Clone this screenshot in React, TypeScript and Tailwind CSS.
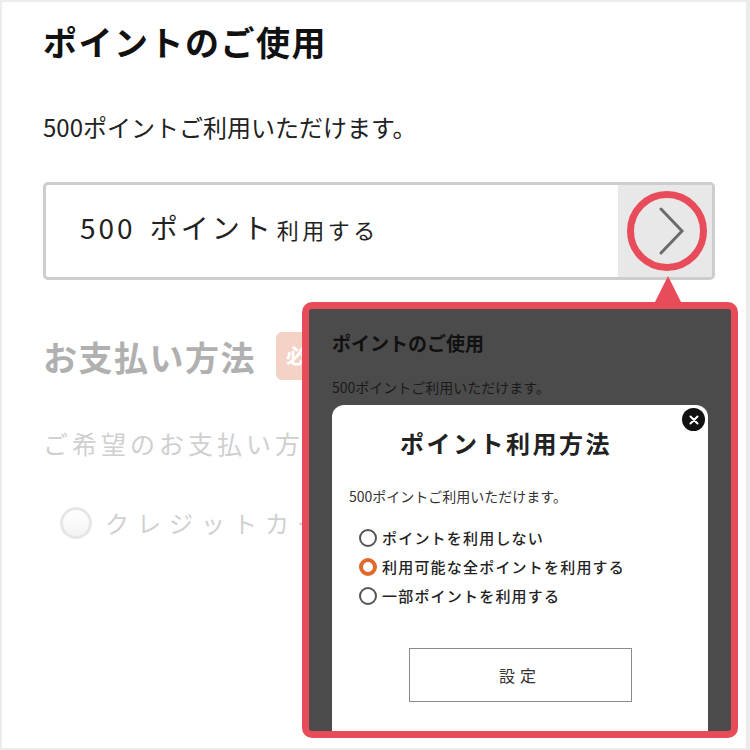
const jp = { fontFamily: '"Noto Sans CJK JP", "Noto Sans", sans-serif' }

function Chevron() {
  return (
    <svg width="30" height="48" viewBox="0 0 30 48" fill="none">
      <path d="M6 2 L27 24 L6 46" stroke="#6b6b6b" strokeWidth="3" strokeLinecap="round" strokeLinejoin="miter" />
    </svg>
  )
}

function Radio({ label, checked }: { label: string; checked?: boolean }) {
  return (
    <div className="flex h-[29px] items-center gap-[5px]">
      {checked ? (
        <span className="h-[18px] w-[18px] rounded-full border-[4px] border-[#e0692b] bg-white" />
      ) : (
        <span className="h-[18px] w-[18px] rounded-full border-2 border-[#555] bg-white" />
      )}
      <span className="text-[15px] font-medium leading-none tracking-[1.2px] text-[#222]">{label}</span>
    </div>
  )
}

export default function App() {
  return (
    <div
      style={jp}
      className="relative h-[750px] w-[750px] overflow-hidden border-b-2 border-l-2 border-r-[4px] border-t-2 border-[#ececec] bg-white"
    >
      {/* Page content */}
      <div className="pl-[41px] pr-[31px] pt-[19px]">
        <h1 className="text-[34px] font-bold leading-[41px] tracking-[1.5px] text-[#111]">ポイントのご使用</h1>

        <p className="mt-[49px] text-[24px] leading-[32px] text-[#222]">500ポイントご利用いただけます。</p>

        {/* Points input */}
        <div className="mt-[39px] flex h-[98px] overflow-hidden rounded-[5px] border-[3px] border-[#cdcdcd]">
          <div className="flex flex-1 items-center pb-[9px] pl-[34px] text-[#222]">
            <span className="text-[28px] tracking-[3px]">500</span>
            <span className="ml-[14px] text-[28px] tracking-[3px]">ポイント</span>
            <span className="ml-[3px] mt-[6px] text-[22px] tracking-[3.5px]">利用する</span>
          </div>
          <div className="flex w-[94px] items-center justify-center bg-[#e8e8e8] pl-[10px]">
            <Chevron />
          </div>
        </div>

        {/* Faded: payment method */}
        <div className="mt-[52px] flex items-center gap-[20px]">
          <h2 className="text-[34px] font-bold leading-[41px] tracking-[1.5px] text-[#b0b0b0]">お支払い方法</h2>
          <span className="flex h-[48px] items-center rounded-[6px] bg-[#f4d2c6] px-[10px] text-[20px] font-bold text-white">
            必須
          </span>
        </div>

        <div className="mt-[47px] w-[262px] overflow-hidden">
          <p className="text-[25px] leading-[32px] tracking-[4px] whitespace-nowrap text-[#cfcfcf]">
            ご希望のお支払い方法をお選びください。
          </p>
        </div>

        <div className="mt-[46px] flex w-[262px] items-center gap-[13px] overflow-hidden pl-[17px]">
          <span className="h-[32px] w-[32px] shrink-0 rounded-full border-[3px] border-[#e6e6e6] bg-gradient-to-b from-white to-[#f3f3f3]" />
          <span className="whitespace-nowrap text-[24px] tracking-[8px] text-[#d0d0d0]">クレジットカード</span>
        </div>
      </div>

      {/* Annotation: circle around arrow */}
      <div className="absolute left-[625px] top-[189px] h-[80px] w-[80px] rounded-full border-[7px] border-[#e84c5a]" />

      {/* Annotation: pointer */}
      <svg className="absolute left-[650px] top-[272px]" width="32" height="32" viewBox="0 0 32 32">
        <polygon points="16,2 2,30 30,30" fill="#e84c5a" />
      </svg>

      {/* Callout with zoomed modal */}
      <div className="absolute left-[300px] top-[300px] h-[436px] w-[436px] rounded-[10px] bg-[#e84c5a] p-[7px]">
        <div className="flex h-full flex-col overflow-hidden rounded-[3px] bg-[#4b4b4b] px-[23px]">
          <h3 className="mt-[21px] text-[19px] font-bold leading-[26px] text-[#111]">ポイントのご使用</h3>
          <p className="mt-[21px] text-[14px] leading-[20px] text-[#1a1a1a]">500ポイントご利用いただけます。</p>

          <div className="relative mt-[8px] flex-1 rounded-t-[12px] bg-white">
            <button className="absolute right-[3px] top-[3px] flex h-[23px] w-[23px] items-center justify-center rounded-full bg-[#111]">
              <svg width="10" height="10" viewBox="0 0 10 10">
                <path d="M1.5 1.5 L8.5 8.5 M8.5 1.5 L1.5 8.5" stroke="#fff" strokeWidth="2" strokeLinecap="round" />
              </svg>
            </button>

            <h4 className="pr-[28px] pt-[22px] text-center text-[24px] font-bold leading-[32px] tracking-[2.5px] text-[#222]">
              ポイント利用方法
            </h4>

            <p className="mt-[27px] pl-[17px] text-[14px] leading-[20px] text-[#333]">500ポイントご利用いただけます。</p>

            <div className="mt-[17px] flex flex-col pl-[27px]">
              <Radio label="ポイントを利用しない" />
              <Radio label="利用可能な全ポイントを利用する" checked />
              <Radio label="一部ポイントを利用する" />
            </div>

            <div className="mt-[38px] flex justify-center">
              <button className="flex h-[54px] w-[223px] items-center justify-center border-[1.5px] border-[#8a8a8a] bg-white text-[16px] tracking-[5px] text-[#333]">
                設定
              </button>
            </div>
          </div>
        </div>
      </div>
    </div>
  )
}
